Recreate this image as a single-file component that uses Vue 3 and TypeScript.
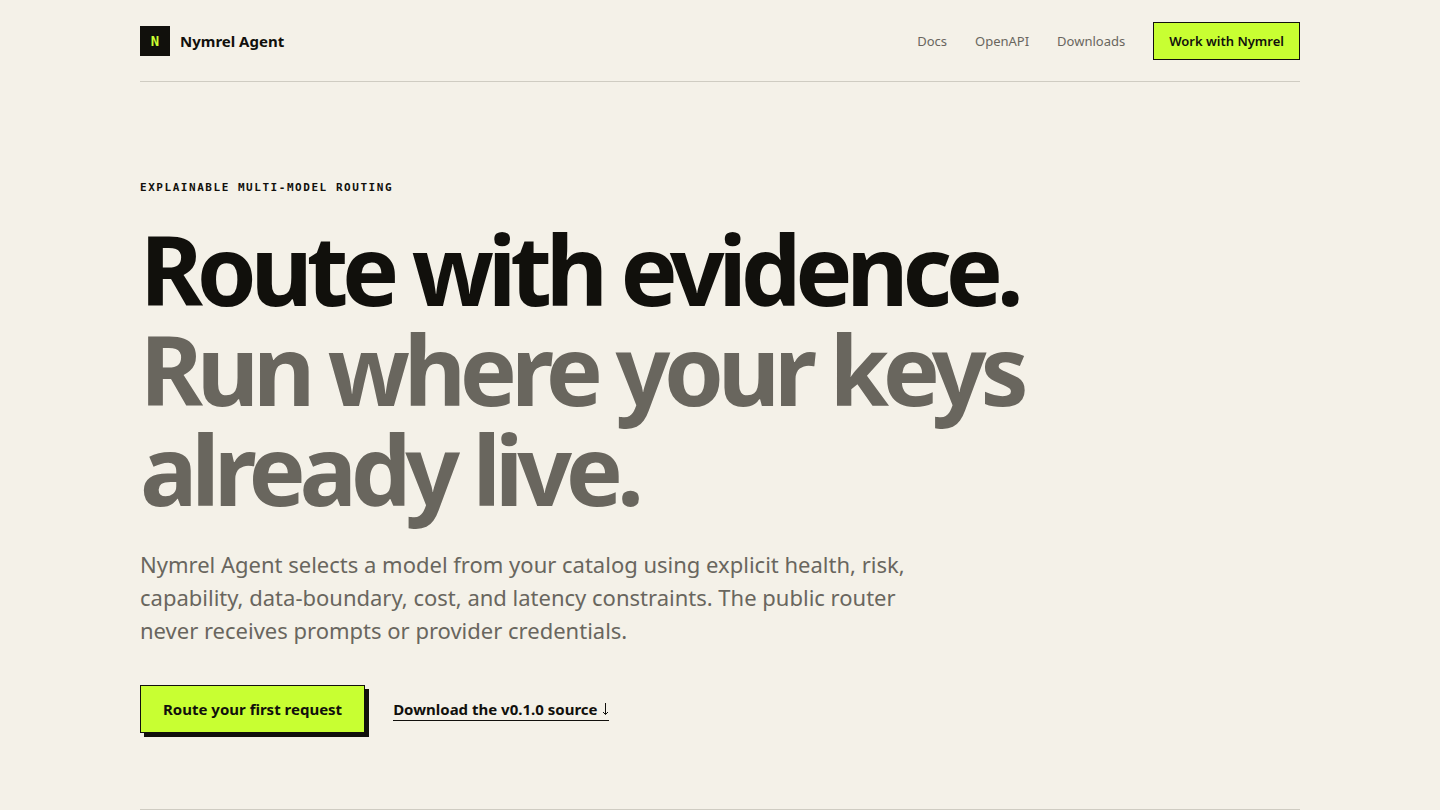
<script setup lang="ts">
interface NavLink {
  label: string
  href: string
}

const links: NavLink[] = [
  { label: 'Docs', href: '#docs' },
  { label: 'OpenAPI', href: '#openapi' },
  { label: 'Downloads', href: '#downloads' },
]
</script>

<template>
  <div class="page">
    <header class="topbar">
      <a class="brand" href="#top">
        <span class="mark" aria-hidden="true">N</span>
        <span>Nymrel Agent</span>
      </a>
      <nav class="nav" aria-label="Main">
        <a v-for="link in links" :key="link.href" class="nav-link" :href="link.href">{{ link.label }}</a>
        <a class="nav-cta" href="#work">Work with Nymrel</a>
      </nav>
    </header>

    <main>
      <section class="hero">
        <p class="eyebrow">Explainable multi-model routing</p>
        <h1 class="title">
          Route with evidence.
          <span class="title-muted">Run where your keys already live.</span>
        </h1>
        <p class="lede">
          Nymrel Agent selects a model from your catalog using explicit health, risk,
          capability, data-boundary, cost, and latency constraints. The public router
          never receives prompts or provider credentials.
        </p>
        <div class="actions">
          <a class="primary" href="#start">Route your first request</a>
          <a class="download" href="#source">Download the v0.1.0 source <svg class="arrow" viewBox="0 0 8 12" aria-hidden="true"><path d="M4.5 0V11.5M2 9L4.5 11.5L7 9" /></svg></a>
        </div>
      </section>
    </main>
  </div>
</template>

<style>
body {
  margin: 0;
  background: #f4f1e8;
}
</style>

<style scoped>
.page {
  max-width: 1160px;
  margin: 0 auto;
  color: #11100c;
  font-family: "Segoe UI", "Noto Sans", "Open Sans", sans-serif;
}

a {
  color: inherit;
  text-decoration: none;
}

.topbar {
  display: flex;
  align-items: center;
  justify-content: space-between;
  padding: 22px 0 21px;
  border-bottom: 1px solid #cfccc2;
}

.brand {
  display: flex;
  align-items: center;
  gap: 10px;
  font-size: 15px;
  font-weight: 700;
  line-height: 20px;
}

.mark {
  display: grid;
  place-items: center;
  width: 30px;
  height: 30px;
  background: #11100c;
  color: #c8ff32;
  font-family: Consolas, "DejaVu Sans Mono", monospace;
  font-size: 14px;
}

.nav {
  display: flex;
  align-items: center;
  gap: 28px;
  font-size: 13px;
  line-height: 18px;
}

.nav-link {
  color: #69665e;
}

.nav-cta {
  padding: 9px 15px;
  border: 1px solid #11100c;
  background: #c8ff32;
  font-weight: 600;
}

.hero {
  padding: 97px 0 76px;
  border-bottom: 1px solid #cfccc2;
}

.eyebrow {
  margin: 0;
  font-family: Consolas, "DejaVu Sans Mono", monospace;
  font-size: 11px;
  font-weight: 700;
  line-height: 18px;
  letter-spacing: 0.14em;
  text-transform: uppercase;
}

.title {
  max-width: 980px;
  margin: 22px 0 0;
  font-size: 96px;
  font-weight: 700;
  line-height: 100px;
  letter-spacing: -0.065em;
}

.title-muted {
  display: block;
  color: #69665e;
}

.lede {
  max-width: 780px;
  margin: 29px 0 0;
  color: #69665e;
  font-size: 22px;
  line-height: 33px;
}

.actions {
  display: flex;
  align-items: center;
  gap: 28px;
  margin-top: 38px;
  font-size: 15px;
  font-weight: 700;
  line-height: 22px;
}

.primary {
  padding: 12px 22px;
  border: 1px solid #11100c;
  background: #c8ff32;
  box-shadow: 4px 4px 0 #11100c;
}

.download {
  border-bottom: 1px solid #11100c;
}

.arrow {
  width: 8px;
  height: 12px;
  fill: none;
  stroke: currentColor;
}
</style>
